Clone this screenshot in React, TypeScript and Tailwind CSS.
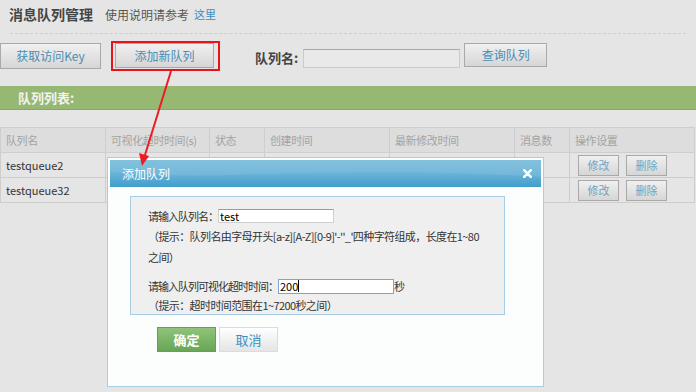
import React from "react";

const font = { fontFamily: '"Microsoft YaHei", "Noto Sans CJK SC", "Noto Sans", sans-serif' };

const GrayButton = ({ label, className }: { label: string; className: string }) => (
    <div
        className={
            "flex items-center justify-center border border-[#a9a9a9] bg-gradient-to-b from-[#f0f0f0] to-[#d6d6d6] text-[#4b8db5] " +
            className
        }
    >
        {label}
    </div>
);

const columns = [
    { name: "队列名", w: "w-[105px]" },
    { name: "可视化超时时间(s)", w: "w-[104px]" },
    { name: "状态", w: "w-[55px]" },
    { name: "创建时间", w: "w-[125px]" },
    { name: "最新修改时间", w: "w-[125px]" },
    { name: "消息数", w: "w-[55px]" },
    { name: "操作设置", w: "w-[125px]" },
];

const rows = ["testqueue2", "testqueue32"];

export default function App() {
    return (
        <div className="relative w-[696px] h-[392px] overflow-hidden bg-[#e5e5e5] text-[#333]" style={font}>
            {/* page header */}
            <div className="flex items-center h-[28px] pl-[9px] pt-[1px]">
                <span className="text-[14px] font-bold text-[#454545]">消息队列管理</span>
                <span className="ml-[12px] text-[12px] text-[#555]">使用说明请参考</span>
                <span className="ml-[5px] text-[11px] text-[#3a8fc0]">这里</span>
            </div>
            <div className="mx-[10px] mt-[5px] border-t border-dashed border-[#cdcdcd]" />

            {/* toolbar */}
            <div className="flex items-start mt-[9px] h-[26px]">
                <GrayButton label="获取访问Key" className="w-[101px] h-[26px] text-[12px]" />
                <GrayButton label="添加新队列" className="ml-[14px] w-[99px] h-[25px] text-[12px]" />
                <span className="ml-[41px] mt-[5px] text-[13px] font-bold text-[#444]">队列名:</span>
                <div className="ml-[5px] mt-[6px] w-[157px] h-[19px] border border-[#c9c9ce] border-t-[#a8a8a8] bg-[#e9e9e9]" />
                <GrayButton label="查询队列" className="ml-[4px] w-[83px] h-[24px] text-[12px]" />
            </div>

            {/* list bar */}
            <div className="mt-[17px] h-[24px] bg-[#96b873] border-b border-[#86a866] pl-[18px] text-[13px] font-bold leading-[23px] text-[#f2f2f2]">
                队列列表:
            </div>

            {/* table */}
            <table className="mt-[17px] w-[695px] table-fixed border-collapse">
                <thead>
                    <tr className="h-[25px] bg-[#dddddd]">
                        {columns.map(c => (
                            <th key={c.name} className={"border border-[#cecece] px-[5px] text-left text-[11px] font-normal tracking-[-0.4px] text-[#a3a3a3] " + c.w}>
                                {c.name}
                            </th>
                        ))}
                    </tr>
                </thead>
                <tbody>
                    {rows.map(r => (
                        <tr key={r} className="h-[25px]">
                            <td className="border border-[#cecece] px-[5px] text-[11px] text-[#333]">{r}</td>
                            <td className="border border-[#cecece]" />
                            <td className="border border-[#cecece]" />
                            <td className="border border-[#cecece]" />
                            <td className="border border-[#cecece]" />
                            <td className="border border-[#cecece]" />
                            <td className="border border-[#cecece] pl-[8px]">
                                <div className="flex gap-[7px]">
                                    <GrayButton label="修改" className="w-[41px] h-[21px] text-[11px] !text-[#6aa4c6]" />
                                    <GrayButton label="删除" className="w-[41px] h-[21px] text-[11px] !text-[#6aa4c6]" />
                                </div>
                            </td>
                        </tr>
                    ))}
                </tbody>
            </table>

            {/* red highlight on the add button */}
            <div className="absolute left-[111px] top-[41px] w-[109px] h-[30px] border-2 border-[#e8141b]" />

            {/* modal */}
            <div className="absolute left-[107px] top-[157px] w-[437px] h-[230px] border border-[#a9cde6] bg-[#fcfefe] p-[2px]">
                <div className="relative h-[27px] overflow-hidden bg-gradient-to-b from-[#79bddc] via-[#69b3d7] to-[#3f9dcb] flex items-center pl-[12px] text-[12px] text-white">
                    <svg className="absolute inset-0" width="431" height="27" viewBox="0 0 431 27" preserveAspectRatio="none">
                        <path d="M0 0 H431 V17 C330 10 200 12 120 15 C70 17 30 14 0 12 Z" fill="#ffffff" opacity="0.08" />
                    </svg>
                    <span className="relative">添加队列</span>
                    <svg className="absolute right-[9px] top-[9px]" width="9" height="9" viewBox="0 0 9 9">
                        <path d="M1.2 1.2 L7.8 7.8 M7.8 1.2 L1.2 7.8" stroke="#ffffff" strokeWidth="2.4" strokeLinecap="round" />
                    </svg>
                </div>

                <div className="ml-[20px] mt-[9px] w-[375px] h-[119px] border border-[#a8cce4] bg-[#efefef] pl-[17px] pt-[10px] text-[11px] tracking-[-1px] text-[#333] whitespace-nowrap">
                    <div className="flex items-center h-[18px]">
                        <span>请输入队列名：</span>
                        <div className="w-[116px] h-[14px] border border-[#cfcfcf] border-t-[#9a9a9a] bg-white text-[11px] tracking-normal leading-[12px] pl-[1px] text-black">test</div>
                    </div>
                    <div className="mt-[1px] leading-[21px] tracking-[-0.6px]">
                        <div>（提示：队列名由字母开头[a-z][A-Z][0-9]'-''_'四种字符组成，长度在1~80</div>
                        <div>之间）</div>
                    </div>
                    <div className="flex items-center h-[18px] mt-[9px]">
                        <span>请输入队列可视化超时时间：</span>
                        <div className="flex items-center w-[116px] h-[15px] border border-[#7ba5d6] bg-white text-[11px] tracking-normal pl-[1px] text-black">
                            200<span className="inline-block w-px h-[12px] bg-black" />
                        </div>
                        <span>秒</span>
                    </div>
                    <div className="leading-[20px] tracking-[-0.6px]">（提示：超时时间范围在1~7200秒之间）</div>
                </div>

                <div className="flex gap-[3px] ml-[47px] mt-[12px]">
                    <div className="flex items-center justify-center w-[59px] h-[25px] border border-[#66a052] bg-gradient-to-b from-[#8fc47a] to-[#68a656] text-[13px] font-bold text-white">
                        确定
                    </div>
                    <div className="flex items-center justify-center w-[59px] h-[25px] border border-[#dcdcdc] bg-gradient-to-b from-[#ffffff] to-[#e4e4e4] text-[13px] text-[#3a8fc0]">
                        取消
                    </div>
                </div>
            </div>

            {/* red arrow */}
            <svg className="absolute left-0 top-0" width="696" height="392" viewBox="0 0 696 392">
                <line x1="171" y1="71" x2="145" y2="155" stroke="#ec1b24" strokeWidth="2" />
                <polygon points="142,166 139,153 149,156" fill="#ec1b24" />
            </svg>
        </div>
    );
}
